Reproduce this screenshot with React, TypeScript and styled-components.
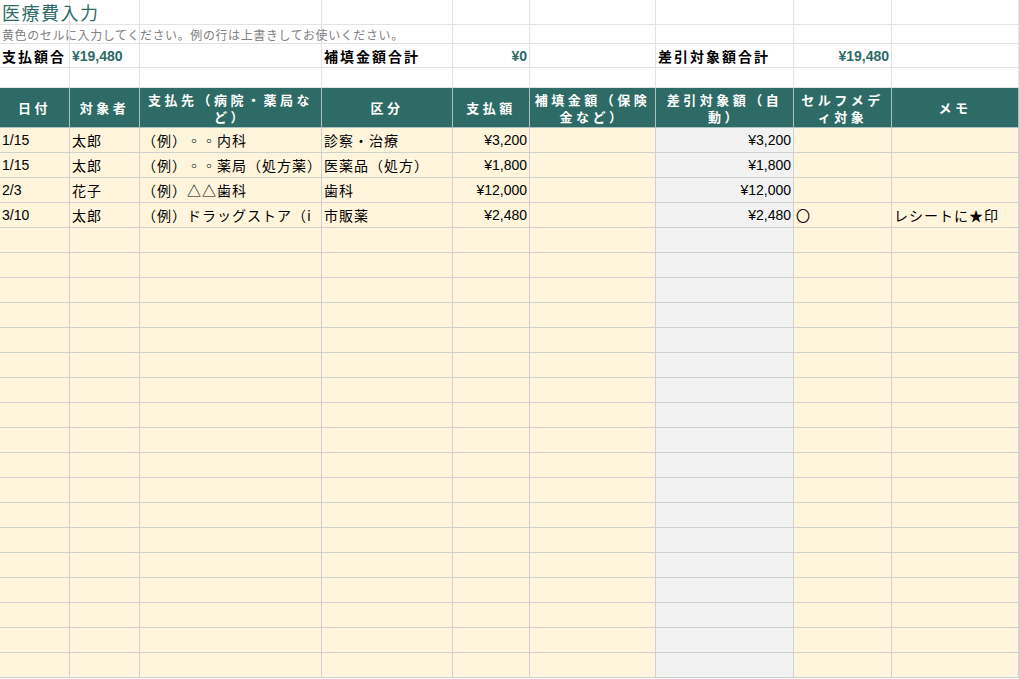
import React from 'react'
import styled, { createGlobalStyle } from 'styled-components'

const GlobalStyle = createGlobalStyle`
  html, body { margin: 0; padding: 0; background: #fff; }
  body { font-family: "Liberation Sans", "Noto Sans CJK JP", sans-serif; }
`

const COLS = [70, 70, 182, 131, 77, 126, 138, 98, 127]
const DATA_ROWS = 22

type Kind = 'plain' | 'head' | 'input' | 'calc'

const Sheet = styled.div`
  display: grid;
  grid-template-columns: ${COLS.map((c) => c + 'px').join(' ')};
  grid-template-rows: 25px 19px 24px 20px 40px repeat(${DATA_ROWS}, 25px);
  width: 1019px;
  height: 679px;
  overflow: hidden;
`

const bg: Record<Kind, string> = {
  plain: '#ffffff',
  head: '#2e6b66',
  input: '#fff5dc',
  calc: '#f2f2f2',
}

const Cell = styled.div<{ $kind: Kind; $align?: string; $bold?: boolean; $color?: string; $size?: number }>`
  box-sizing: border-box;
  background: ${({ $kind }) => bg[$kind]};
  border-right: 1px solid ${({ $kind }) => ($kind === 'head' ? '#a9c2bf' : $kind === 'plain' ? '#e3e3e3' : '#d0d0d0')};
  border-bottom: 1px solid ${({ $kind }) => ($kind === 'head' ? '#a9c2bf' : $kind === 'plain' ? '#e3e3e3' : '#d0d0d0')};
  padding: 0 2px;
  display: flex;
  align-items: center;
  justify-content: ${({ $align }) => ($align === 'right' ? 'flex-end' : $align === 'center' ? 'center' : 'flex-start')};
  white-space: nowrap;
  overflow: visible;
  font-size: ${({ $size }) => $size ?? 14}px;
  font-weight: ${({ $bold }) => ($bold ? 700 : 400)};
  color: ${({ $color }) => $color ?? '#000'};
  position: relative;
  z-index: 0;
`

const Clip = styled.span`
  overflow: hidden;
  display: block;
  width: 100%;
`

const HeadCell = styled(Cell)`
  white-space: normal;
  text-align: center;
  color: #fff;
  font-weight: 700;
  font-size: 13px;
  letter-spacing: 3.5px;
  line-height: 17px;
  padding: 0 3px;
`

const Jp = styled.span<{ $spacing?: number }>`
  font-family: "Noto Sans CJK JP", sans-serif;
  letter-spacing: ${({ $spacing }) => $spacing ?? 1}px;
`

const teal = '#2e6b66'
const headers = ['日付', '対象者', '支払先（病院・薬局など）', '区分', '支払額', '補填金額（保険金など）', '差引対象額（自動）', 'セルフメディ対象', 'メモ']

const rows = [
  ['1/15', '太郎', '（例）◦◦内科', '診察・治療', '¥3,200', '', '¥3,200', '', ''],
  ['1/15', '太郎', '（例）◦◦薬局（処方薬）', '医薬品（処方）', '¥1,800', '', '¥1,800', '', ''],
  ['2/3', '花子', '（例）△△歯科', '歯科', '¥12,000', '', '¥12,000', '', ''],
  ['3/10', '太郎', '（例）ドラッグストア（i', '市販薬', '¥2,480', '', '¥2,480', '〇', 'レシートに★印'],
]

export default function App() {
  const blank = (n: number, key: string) =>
    Array.from({ length: n }, (_, i) => <Cell $kind="plain" key={key + i} />)

  const body = Array.from({ length: DATA_ROWS }, (_, r) => {
    const row = rows[r] ?? Array(9).fill('')
    return row.map((v, c) => {
      const numeric = c === 0 || c === 4 || c === 6
      return (
        <Cell
          key={`d${r}-${c}`}
          $kind={c === 6 ? 'calc' : 'input'}
          $align={c === 4 || c === 6 ? 'right' : 'left'}
        >
          {c === 2 ? <Clip><Jp>{v}</Jp></Clip> : numeric ? v : <Jp>{v}</Jp>}
        </Cell>
      )
    })
  })

  return (
    <>
      <GlobalStyle />
      <Sheet>
        <Cell $kind="plain" $color={teal} $size={18} style={{ zIndex: 1 }}>
          <Jp $spacing={1.5}>医療費入力</Jp>
        </Cell>
        {blank(8, 't')}
        <Cell $kind="plain" $color="#808080" $size={12} style={{ zIndex: 1 }}>
          <Jp $spacing={0.6}>黄色のセルに入力してください。例の行は上書きしてお使いください。</Jp>
        </Cell>
        {blank(8, 's')}
        <Cell $kind="plain" $bold><Jp $spacing={2}>支払額合</Jp></Cell>
        <Cell $kind="plain" $bold $color={teal}>¥19,480</Cell>
        <Cell $kind="plain" />
        <Cell $kind="plain" $bold><Jp $spacing={2}>補填金額合計</Jp></Cell>
        <Cell $kind="plain" $bold $color={teal} $align="right">¥0</Cell>
        <Cell $kind="plain" />
        <Cell $kind="plain" $bold><Jp $spacing={2}>差引対象額合計</Jp></Cell>
        <Cell $kind="plain" $bold $color={teal} $align="right">¥19,480</Cell>
        <Cell $kind="plain" />
        {blank(9, 'e')}
        {headers.map((h) => (
          <HeadCell $kind="head" $align="center" key={h}>
            <Jp $spacing={3.5}>{h}</Jp>
          </HeadCell>
        ))}
        {body}
      </Sheet>
    </>
  )
}
